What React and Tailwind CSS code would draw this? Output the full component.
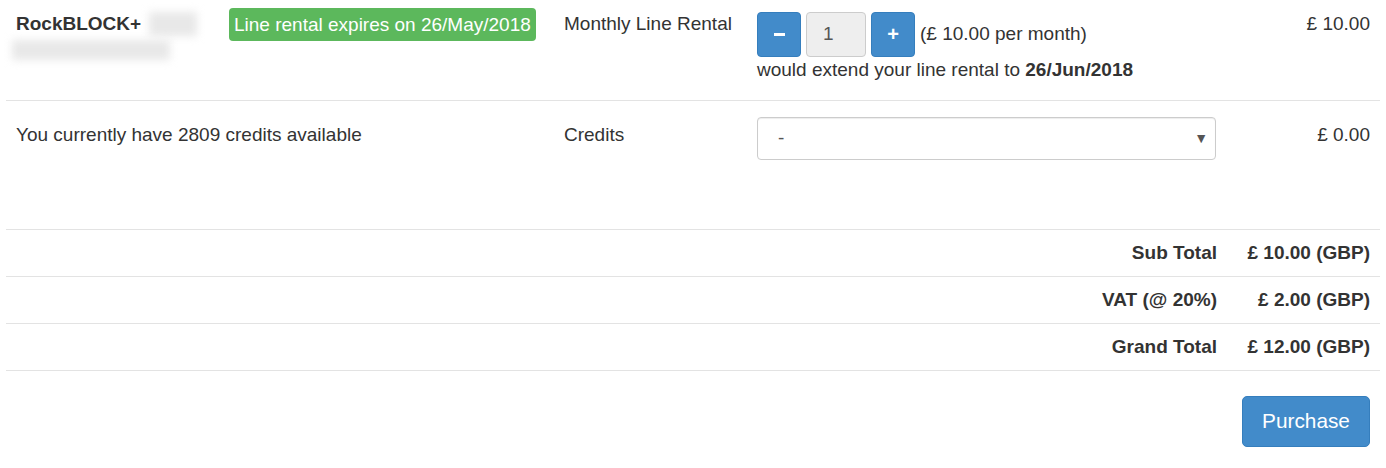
import React from "react";

export default function App() {
  return (
    <div className="w-[1386px] h-[468px] bg-white text-[#333] text-[19px] leading-[26.67px]" style={{ fontFamily: '"Liberation Sans", Arial, sans-serif' }}>
      <div className="ml-[6px] w-[1374px]">
        {/* Row 1 */}
        <div className="grid grid-cols-[548px_193px_480px_153px] h-[101px] border-b border-[#e3e3e3]">
          <div className="flex pl-[10px] pt-[11px]">
            <div className="w-[213px]">
              <div className="flex items-center">
                <span className="font-bold">RockBLOCK+</span>
                <span className="ml-[8px] w-[48px] h-[24px] bg-[#e8e8e8] blur-[4px]"></span>
              </div>
              <div className="mt-[2px] -ml-[4px] w-[158px] h-[20px] bg-[#e8e8e8] blur-[4px]"></div>
            </div>
            <div className="-mt-[3px] h-[33px] px-[5px] bg-[#5cb85c] text-white rounded-[4px] leading-[33px] whitespace-nowrap">
              Line rental expires on 26/May/2018
            </div>
          </div>
          <div className="pl-[10px] pt-[11px]">Monthly Line Rental</div>
          <div className="pl-[10px] pt-[12px]">
            <div className="flex items-center">
              <button className="w-[44px] h-[45px] bg-[#428bca] border border-[#357ebd] rounded-[4px] text-white font-bold flex items-center justify-center">
                <span className="block w-[11px] h-[3px] bg-white"></span>
              </button>
              <div className="ml-[5px] w-[60px] h-[45px] bg-[#eeeeee] border border-[#cccccc] rounded-[4px] flex items-center pl-[16px] text-[#555]">1</div>
              <button className="ml-[5px] w-[44px] h-[45px] bg-[#428bca] border border-[#357ebd] rounded-[4px] text-white font-bold flex items-center justify-center text-[20px]">+</button>
              <span className="ml-[5px]">(£ 10.00 per month)</span>
            </div>
            <div>would extend your line rental to <span className="font-bold">26/Jun/2018</span></div>
          </div>
          <div className="pr-[10px] pt-[11px] text-right">£ 10.00</div>
        </div>
        {/* Row 2 */}
        <div className="grid grid-cols-[548px_193px_480px_153px] h-[129px] border-b border-[#e3e3e3]">
          <div className="pl-[10px] pt-[21px]">You currently have 2809 credits available</div>
          <div className="pl-[10px] pt-[21px]">Credits</div>
          <div className="pl-[10px] pt-[16px]">
            <div className="w-[459px] h-[43px] border border-[#cccccc] rounded-[4px] flex items-center justify-between pl-[20px] pr-[7px] text-[#555] shadow-[inset_0_1px_1px_rgba(0,0,0,0.075)]">
              <span>-</span>
              <span className="text-[14px] text-[#555]">▼</span>
            </div>
          </div>
          <div className="pr-[10px] pt-[21px] text-right">£ 0.00</div>
        </div>
        {/* Totals */}
        {[
          ["Sub Total", "£ 10.00 (GBP)"],
          ["VAT (@ 20%)", "£ 2.00 (GBP)"],
          ["Grand Total", "£ 12.00 (GBP)"],
        ].map(([l, v]) => (
          <div key={l} className="grid grid-cols-[1221px_153px] h-[47px] border-b border-[#e3e3e3] items-center font-bold">
            <div className="text-right pr-[10px]">{l}</div>
            <div className="text-right pr-[10px]">{v}</div>
          </div>
        ))}
        <div className="flex justify-end pr-[10px] pt-[25px]">
          <button className="w-[128px] h-[51px] bg-[#428bca] border border-[#357ebd] rounded-[5px] text-white text-[20.8px]">Purchase</button>
        </div>
      </div>
    </div>
  );
}
